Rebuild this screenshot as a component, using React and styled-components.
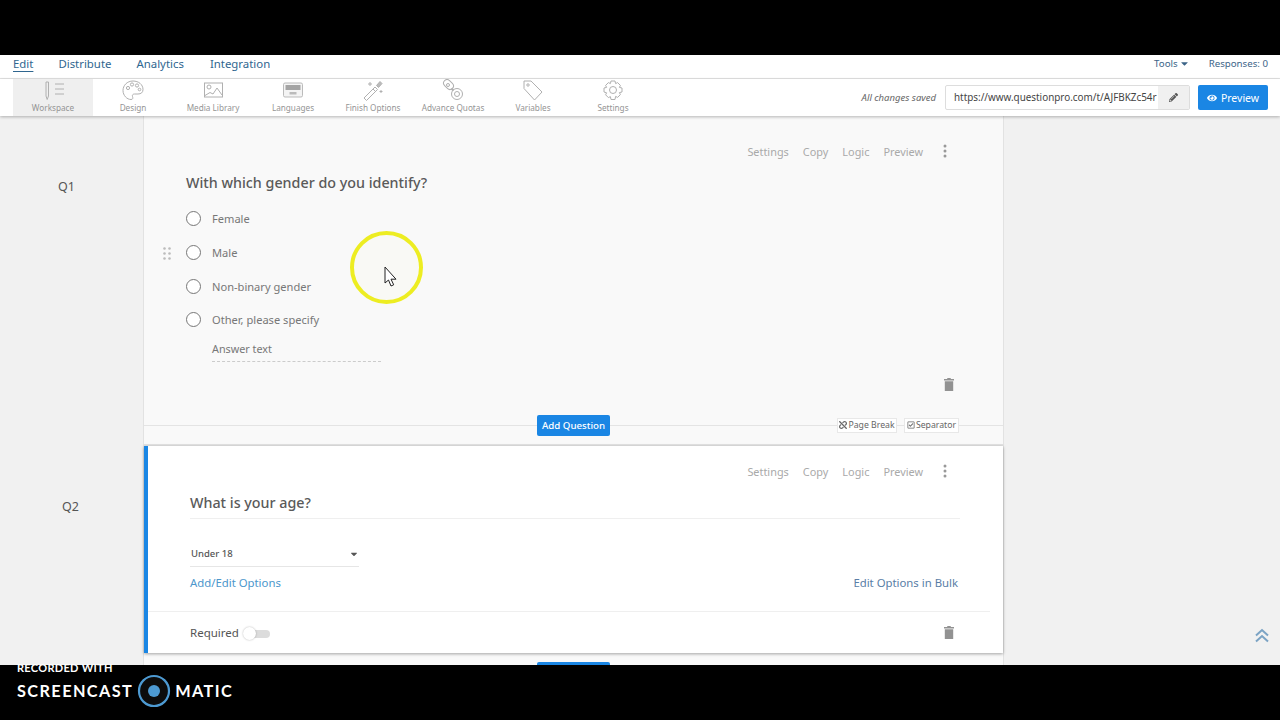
import React from "react";
import styled, { createGlobalStyle } from "styled-components";
import { FaEye, FaPencilAlt, FaRegCheckSquare, FaUnlink, FaCaretDown } from "react-icons/fa";

const Global = createGlobalStyle`
  html, body { margin: 0; padding: 0; background: #000; }
  * { box-sizing: border-box; }
  body { font-family: "Noto Sans", "Open Sans", sans-serif; }
`;

const Page = styled.div`
  position: relative;
  width: 1280px;
  height: 720px;
  overflow: hidden;
  display: flex;
  flex-direction: column;
  background: #000;
`;
const Letterbox = styled.div`
  height: 55px;
  flex: none;
  background: #000;
`;
const NavBar = styled.nav`
  height: 24px;
  flex: none;
  background: #fff;
  border-bottom: 1px solid #e4e4e4;
  display: flex;
  align-items: center;
  padding: 0 12px 6px 13px;
`;
const NavLink = styled.a`
  font-size: 11.4px;
  line-height: 16px;
  color: #2f668f;
  margin-right: ${(p) => p.$gap}px;
  text-decoration: ${(p) => (p.$active ? "underline" : "none")};
  text-underline-offset: 3px;
`;
const NavRight = styled.div`
  margin-left: auto;
  display: flex;
  align-items: center;
  gap: 19px;
  font-size: 9.7px;
  color: #3c6488;
`;
const ToolsMenu = styled.span`
  display: inline-flex;
  align-items: center;
  gap: 1px;
`;
const ToolBar = styled.div`
  height: 37px;
  flex: none;
  background: #fff;
  display: flex;
  align-items: stretch;
  padding: 0 12px 0 13px;
  box-shadow: 0 1px 3px rgba(0, 0, 0, 0.28);
  position: relative;
  z-index: 2;
`;
const ToolItem = styled.div`
  width: 80px;
  display: flex;
  flex-direction: column;
  align-items: center;
  padding-top: 0;
  background: ${(p) => (p.$active ? "#efefef" : "#fff")};
`;
const ToolIcon = styled.svg`
  width: 24px;
  height: 22px;
  fill: none;
  stroke: #b0b0b0;
  stroke-width: 1;
`;
const ToolLabel = styled.span`
  font-size: 8.2px;
  line-height: 11px;
  margin-top: 1px;
  color: #959595;
`;
const ToolRight = styled.div`
  margin-left: auto;
  display: flex;
  align-items: center;
`;
const SavedNote = styled.span`
  font-size: 9.5px;
  font-style: italic;
  color: #666;
  margin-right: 9px;
`;
const UrlBox = styled.div`
  width: 245px;
  height: 25px;
  border: 1px solid #ddd;
  border-radius: 2px;
  display: flex;
  align-items: stretch;
  margin-right: 8px;
`;
const UrlText = styled.span`
  flex: 1;
  font-size: 9.9px;
  line-height: 23px;
  color: #444;
  padding-left: 8px;
  white-space: nowrap;
`;
const UrlEdit = styled.span`
  width: 31px;
  background: #f0f0f0;
  color: #555;
  display: flex;
  align-items: center;
  justify-content: center;
  font-size: 9px;
`;
const PreviewButton = styled.button`
  width: 70px;
  height: 25px;
  border: 0;
  border-radius: 2px;
  background: #1a86e4;
  color: #fff;
  font: 10.5px "Noto Sans", sans-serif;
  display: flex;
  align-items: center;
  justify-content: center;
  gap: 4px;
  padding: 0;
`;
const Workspace = styled.main`
  flex: 1;
  min-height: 0;
  background: #f1f1f1;
  overflow: hidden;
`;
const QuestionRow = styled.section`
  display: grid;
  grid-template-columns: 143px 861px;
`;
const QLabel = styled.div`
  font-size: 12.5px;
  line-height: 16px;
  color: #555;
  padding: ${(p) => p.$top}px 0 0 ${(p) => p.$left}px;
`;
const Q1Card = styled.div`
  height: 330px;
  background: #f9f9f9;
  border: 1px solid #e2e2e2;
  border-width: 0 1px 2px 1px;
  padding: 27px 0 0 42px;
  display: flex;
  flex-direction: column;
`;
const Q2Column = styled.div`
  background: #f9f9f9;
  border: 1px solid #e2e2e2;
  border-width: 0 1px;
  height: 220px;
`;
const Q2Card = styled.div`
  height: 207px;
  background: #fff;
  border-left: 4px solid #1a86e4;
  box-shadow: 0 1px 3px rgba(0, 0, 0, 0.35);
  padding: 17px 0 0 42px;
  display: flex;
  flex-direction: column;
`;
const ActionBar = styled.div`
  display: flex;
  justify-content: flex-end;
  align-items: center;
  height: 16px;
  padding-right: 56px;
  gap: 14px;
  font-size: 10.9px;
  color: #a9a9a9;
`;
const Kebab = styled.svg`
  width: 4px;
  height: 14px;
  fill: #999;
  margin-left: 6px;
`;
const Title = styled.h2`
  margin: 14px 0 0 0;
  font-size: 14.3px;
  line-height: 20px;
  font-weight: 500;
  color: #5a5a5a;
`;
const Options = styled.ul`
  list-style: none;
  margin: 9px 0 0;
  padding: 0;
  display: flex;
  flex-direction: column;
`;
const Option = styled.li`
  position: relative;
  height: 33.7px;
  display: flex;
  align-items: center;
  gap: 12px;
  font-size: 11.1px;
  color: #777;
`;
const Radio = styled.span`
  width: 15px;
  height: 15px;
  border: 1px solid #777;
  border-radius: 50%;
  background: #fff;
  margin-right: -1px;
`;
const Grip = styled.svg`
  position: absolute;
  left: -23px;
  top: 11px;
  width: 8px;
  height: 13px;
  fill: #bcbcbc;
`;
const AnswerField = styled.div`
  width: 169px;
  height: 21px;
  margin: 4px 0 0 26px;
  border-bottom: 1px dashed #ccc;
  font-size: 10.8px;
  line-height: 16px;
  color: #777;
`;
const TrashRow = styled.div`
  display: flex;
  justify-content: flex-end;
  padding-right: 49px;
  margin-top: 16px;
`;
const TrashIcon = styled.svg`
  width: 10px;
  height: 13px;
  fill: #929292;
`;
const BreakLine = styled.div`
  position: relative;
  margin: 24px 0 0 -42px;
  height: 21px;
  display: flex;
  align-items: center;
  justify-content: flex-end;
  padding-right: 44px;
  gap: 7px;
  &::before {
    content: "";
    position: absolute;
    left: 0;
    right: 0;
    top: 10px;
    border-top: 1px solid #e4e4e4;
  }
`;
const AddQuestion = styled.button`
  position: absolute;
  left: 393px;
  top: 0;
  width: 73px;
  height: 21px;
  border: 0;
  border-radius: 2px;
  background: #1a86e4;
  color: #fff;
  font: 500 9.7px "Noto Sans", sans-serif;
  padding: 0;
`;
const SmallButton = styled.span`
  position: relative;
  height: 15px;
  background: #fff;
  border: 1px solid #e8e8e8;
  display: inline-flex;
  align-items: center;
  justify-content: center;
  width: ${(p) => p.$width}px;
  gap: 1px;
  font-size: 8.7px;
  color: #666;
`;
const Q2Title = styled(Title)`
  height: 26px;
  margin-right: 43px;
  border-bottom: 1px solid #efefef;
`;
const SelectRow = styled.div`
  width: 169px;
  height: 21px;
  margin-top: 27px;
  border-bottom: 1px solid #e6e6e6;
  display: flex;
  justify-content: space-between;
  align-items: center;
  padding: 0 0 5px 1px;
  font-size: 9.5px;
  font-weight: 500;
  color: #555;
`;
const LinkRow = styled.div`
  display: flex;
  justify-content: space-between;
  padding-right: 45px;
  margin-top: 7px;
  height: 18px;
  font-size: 11.35px;
  line-height: 18px;
`;
const AddLink = styled.a`
  color: #4d97cc;
`;
const BulkLink = styled.a`
  color: #5a7ea6;
`;
const RequiredRow = styled.div`
  margin: 19px 0 0 -42px;
  padding: 0 47px 0 42px;
  width: 842px;
  border-top: 1px solid #efefef;
  height: 42px;
  display: flex;
  align-items: center;
`;
const RequiredLabel = styled.span`
  font-size: 11.5px;
  color: #555;
`;
const Toggle = styled.span`
  position: relative;
  width: 20px;
  height: 8px;
  margin: 2px 0 0 11px;
  border-radius: 4px;
  background: #dcdcdc;
  &::before {
    content: "";
    position: absolute;
    left: -7px;
    top: -3px;
    width: 13px;
    height: 13px;
    border-radius: 50%;
    background: #fff;
    box-shadow: 0 0 2px rgba(0, 0, 0, 0.3);
  }
`;
const RowEnd = styled.span`
  margin-left: auto;
  margin-right: -11px;
  display: flex;
`;
const NextAdd = styled.div`
  width: 73px;
  height: 21px;
  background: #1a86e4;
  border-radius: 2px;
  margin: 9px 0 0 393px;
`;
const Recorder = styled.footer`
  height: 55px;
  flex: none;
  background: #000;
  color: #fff;
  padding-left: 17px;
  position: relative;
  z-index: 3;
`;
const RecordedWith = styled.div`
  font: 700 11px/12px "Lato", sans-serif;
  letter-spacing: 0.3px;
  margin-top: -3px;
  height: 9px;
`;
const Brand = styled.div`
  margin-top: 3px;
  display: flex;
  align-items: center;
  font: 700 16.3px/34px "Lato", sans-serif;
  letter-spacing: 1.4px;
`;
const BrandLogo = styled.svg`
  width: 34px;
  height: 34px;
  margin: 0 4px 0 4px;
`;
const Highlight = styled.div`
  position: absolute;
  left: 350px;
  top: 231px;
  width: 73px;
  height: 73px;
  border: 4px solid #eded22;
  border-radius: 50%;
  background: rgba(255, 255, 200, 0.08);
  filter: blur(0.5px);
  z-index: 4;
`;
const Pointer = styled.svg`
  position: absolute;
  left: 384px;
  top: 266px;
  width: 14px;
  height: 22px;
  z-index: 5;
`;
const ScrollTop = styled.svg`
  position: absolute;
  left: 1254px;
  top: 628px;
  width: 16px;
  height: 15px;
  fill: none;
  stroke: #7ba3c4;
  stroke-width: 2;
  z-index: 4;
`;

const toolIcons = {
  Workspace: (
    <>
      <path d="M5 3h2.500v14L6.200 20.500 5 17z" />
      <path d="M14 5h9M14 10h9M14 15h9" />
    </>
  ),
  Design: (
    <>
      <path d="M12 2C6 2 2 6.500 2 11.500S6 20.500 10 20.500c2 0 2-1.500 1.500-3-.5-1.500.5-2.500 2-2.500h3.500c3 0 5-1.500 5-4.500C22 5.500 17.500 2 12 2z" />
      <circle cx="7" cy="9" r="1.600" />
      <circle cx="11" cy="5.500" r="1.600" />
      <circle cx="16" cy="6.500" r="1.600" />
      <circle cx="18.500" cy="10.500" r="1.300" />
    </>
  ),
  "Media Library": (
    <>
      <rect x="3.500" y="4" width="18" height="14" />
      <circle cx="8" cy="8" r="2" />
      <path d="M4 16.500l5-3 3 1.500 4-6 5 7" />
    </>
  ),
  Languages: (
    <>
      <rect x="2.500" y="4" width="19" height="14" rx="1.500" fill="#f4f4f4" stroke="#bbb" />
      <rect x="4.500" y="6" width="15" height="5" fill="#a4a4a4" stroke="none" />
      <rect x="8.500" y="13" width="7" height="2.500" fill="#bbb" stroke="none" />
    </>
  ),
  "Finish Options": (
    <>
      <path d="M3 19l11-11 2.500 2.500-11 11z" />
      <path d="M12 10l2.500 2.500" />
      <path d="M15.500 6.500l3.500-4 2 2-3.500 4z" fill="#bbb" />
      <path d="M9 3v4M7 5h4M20 11v3M18.500 12.500h3" />
    </>
  ),
  "Advance Quotas": (
    <>
      <rect x="2" y="2" width="11" height="7" rx="3.500" transform="rotate(45 7.500 5.500)" />
      <circle cx="7" cy="6" r="1.500" />
      <circle cx="16" cy="15" r="5.500" />
      <circle cx="16" cy="15" r="2.500" />
      <path d="M10.500 9.500l2 2" strokeWidth="2.200" />
    </>
  ),
  Variables: (
    <>
      <path d="M3 2h7l11 11-7.500 8L3 9.500z" />
      <circle cx="7" cy="6" r="1.200" />
    </>
  ),
  Settings: (
    <>
      <path d="M10 2h4l.6 2.600 2-1 2.800 2.800-1 2 2.600.6v4l-2.600.6 1 2-2.800 2.800-2-1L14 20.500h-4l-.6-2.900-2 1-2.800-2.800 1-2L3 13v-4l2.600-.6-1-2 2.800-2.800 2 1z" />
      <circle cx="12" cy="11" r="3.500" />
    </>
  ),
};

const Dots = () => (
  <Kebab viewBox="0 0 4 14">
    <circle cx="2" cy="2" r="1.500" />
    <circle cx="2" cy="7" r="1.500" />
    <circle cx="2" cy="12" r="1.500" />
  </Kebab>
);

const Actions = () => (
  <ActionBar>
    <span>Settings</span>
    <span>Copy</span>
    <span>Logic</span>
    <span>Preview</span>
    <Dots />
  </ActionBar>
);

const Trash = () => (
  <TrashIcon viewBox="0 0 10 13">
    <path d="M3.500 0h3l.5 1H10v1.500H0V1h3zM.8 3.200h8.400V13H.8z" />
  </TrashIcon>
);

export default function App() {
  return (
    <Page>
      <Global />
      <Letterbox />
      <NavBar>
        <NavLink $active $gap={25}>Edit</NavLink>
        <NavLink $gap={25}>Distribute</NavLink>
        <NavLink $gap={26}>Analytics</NavLink>
        <NavLink $gap={0}>Integration</NavLink>
        <NavRight>
          <ToolsMenu>Tools <FaCaretDown size={11} /></ToolsMenu>
          <span>Responses: 0</span>
        </NavRight>
      </NavBar>
      <ToolBar>
        {Object.entries(toolIcons).map(([label, icon], i) => (
          <ToolItem key={label} $active={i === 0}>
            <ToolIcon viewBox="0 0 24 22">{icon}</ToolIcon>
            <ToolLabel>{label}</ToolLabel>
          </ToolItem>
        ))}
        <ToolRight>
          <SavedNote>All changes saved</SavedNote>
          <UrlBox>
            <UrlText>https://www.questionpro.com/t/AJFBKZc54r</UrlText>
            <UrlEdit><FaPencilAlt /></UrlEdit>
          </UrlBox>
          <PreviewButton><FaEye size={10} /> Preview</PreviewButton>
        </ToolRight>
      </ToolBar>
      <Workspace>
        <QuestionRow>
          <QLabel $top={63} $left={58}>Q1</QLabel>
          <Q1Card>
            <Actions />
            <Title>With which gender do you identify?</Title>
            <Options>
              <Option><Radio />Female</Option>
              <Option>
                <Grip viewBox="0 0 8 13">
                  <circle cx="1.500" cy="1.500" r="1.300" />
                  <circle cx="6.500" cy="1.500" r="1.300" />
                  <circle cx="1.500" cy="6.500" r="1.300" />
                  <circle cx="6.500" cy="6.500" r="1.300" />
                  <circle cx="1.500" cy="11.500" r="1.300" />
                  <circle cx="6.500" cy="11.500" r="1.300" />
                </Grip>
                <Radio />Male
              </Option>
              <Option><Radio />Non-binary gender</Option>
              <Option><Radio />Other, please specify</Option>
            </Options>
            <AnswerField>Answer text</AnswerField>
            <TrashRow><Trash /></TrashRow>
            <BreakLine>
              <AddQuestion>Add Question</AddQuestion>
              <SmallButton $width={60}><FaUnlink size={8} /> Page Break</SmallButton>
              <SmallButton $width={55}><FaRegCheckSquare size={8} /> Separator</SmallButton>
            </BreakLine>
          </Q1Card>
        </QuestionRow>
        <QuestionRow>
          <QLabel $top={53} $left={62}>Q2</QLabel>
          <Q2Column>
            <Q2Card>
              <Actions />
              <Q2Title>What is your age?</Q2Title>
              <SelectRow>Under 18 <FaCaretDown size={10} /></SelectRow>
              <LinkRow>
                <AddLink>Add/Edit Options</AddLink>
                <BulkLink>Edit Options in Bulk</BulkLink>
              </LinkRow>
              <RequiredRow>
                <RequiredLabel>Required</RequiredLabel>
                <Toggle />
                <RowEnd><Trash /></RowEnd>
              </RequiredRow>
            </Q2Card>
            <NextAdd />
          </Q2Column>
        </QuestionRow>
      </Workspace>
      <Recorder>
        <RecordedWith>RECORDED WITH</RecordedWith>
        <Brand>
          SCREENCAST
          <BrandLogo viewBox="0 0 34 34">
            <circle cx="17" cy="17" r="15" fill="#0c0c0c" stroke="#4d9ad2" strokeWidth="2.200" />
            <circle cx="17" cy="17" r="6" fill="#4d9ad2" />
          </BrandLogo>
          MATIC
        </Brand>
      </Recorder>
      <Highlight />
      <Pointer viewBox="0 0 14 22">
        <path d="M1 1v16l3.500-3 2.500 6 2.700-1.200L7 13.200h5z" fill="#fff" stroke="#222" strokeWidth="1" />
      </Pointer>
      <ScrollTop viewBox="0 0 16 15">
        <path d="M2 7.500L8 2l6 5.500M2 13.500L8 8l6 5.500" />
      </ScrollTop>
    </Page>
  );
}
